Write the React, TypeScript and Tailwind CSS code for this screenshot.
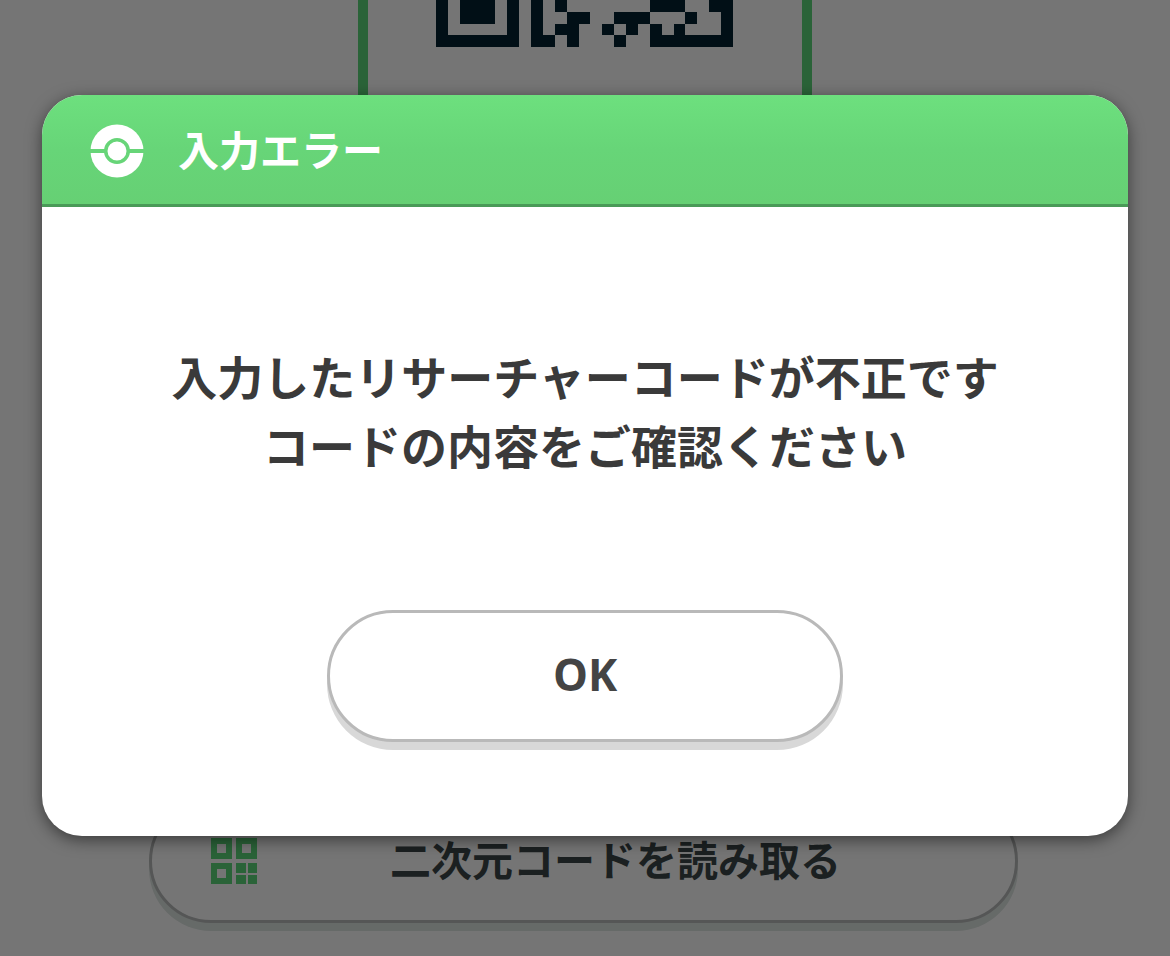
import React from 'react';

const QR_SIZE = 25;

// Last rows of the code, as [start, length] runs of dark modules
const QR_ROWS: [number, number][][] = [
  [[0, 1], [2, 3], [6, 1], [8, 1], [10, 1], [18, 3], [23, 2]],
  [[0, 1], [2, 3], [6, 1], [8, 1], [11, 2], [15, 3], [21, 1], [24, 1]],
  [[0, 1], [6, 1], [8, 1], [10, 2], [14, 1], [16, 1], [18, 1], [20, 1], [24, 1]],
  [[0, 7], [8, 2], [11, 1], [15, 1], [18, 7]],
];

const QrCode: React.FC = () => (
  <svg viewBox={`0 0 ${QR_SIZE} ${QR_ROWS.length}`} className="w-[297px] h-[47px]" preserveAspectRatio="none" shapeRendering="crispEdges" fill="#042130" aria-hidden="true">
    {QR_ROWS.map((runs, y) =>
      runs.map(([x, width]) => <rect key={`${x}-${y}`} x={x} y={y} width={width} height={1} />)
    )}
  </svg>
);

const QrIcon: React.FC = () => (
  <svg viewBox="0 0 46 46" className="w-[46px] h-[46px] shrink-0" fill="#5dd77a" fillRule="evenodd" aria-hidden="true">
    <path d="M0 0h21v21H0zM6 6v9h9V6z" />
    <path d="M25 0h21v21H25zM31 6v9h9V6z" />
    <path d="M0 25h21v21H0zM6 31v9h9v-9z" />
    <path d="M25 25h10v10H25zM37 25h9v10h-9zM25 37h10v9H25zM37 37h9v9h-9z" />
  </svg>
);

const BallIcon: React.FC = () => (
  <svg viewBox="0 0 54 54" className="w-[54px] h-[54px] shrink-0" aria-hidden="true">
    <circle cx="27" cy="27" r="26.5" fill="#fff" />
    <path d="M0 27h54" stroke="#67d578" strokeWidth="4" />
    <circle cx="27" cy="27" r="11.25" fill="#fff" stroke="#67d578" strokeWidth="3.5" />
  </svg>
);

const App: React.FC = () => {
  return (
    <div className="relative min-h-screen overflow-hidden bg-white font-[family-name:'Noto_Sans','Noto_Sans_CJK_JP',sans-serif] font-bold">
      {/* Page behind the dialog */}
      <main className="flex flex-col items-center pb-[33px]">
        <div className="w-[454px] h-[600px] pr-0.5 flex justify-center items-start border-x-10 border-b-10 border-[#5dd77a]">
          <QrCode />
        </div>
        <button className="mt-[199px] mr-[3px] w-[869px] max-w-full h-[124px] px-[59px] flex items-center rounded-full bg-white border-3 border-[#b9bcbb] shadow-[0_8px_0_#dfe6e3] text-[41px] text-[#3c4749]">
          <QrIcon />
          <span className="flex-1 pl-[18px] text-center whitespace-nowrap">二次元コードを読み取る</span>
        </button>
      </main>

      {/* Error dialog */}
      <div className="absolute inset-0 px-[42px] pt-[95px] bg-black/54">
        <div role="dialog" aria-modal="true" aria-labelledby="dialog-title" className="overflow-hidden rounded-[40px] bg-white shadow-[0_4px_16px_rgba(0,0,0,0.5)]">
          <header className="h-28 px-12 pt-0.5 flex items-center gap-[34px] border-b-3 border-[#4a9a58] bg-gradient-to-b from-[#6de07e] via-[#67d578] to-[#66d074]">
            <BallIcon />
            <h1 id="dialog-title" className="text-[41px] leading-none text-white">入力エラー</h1>
          </header>
          <div className="pt-[136px] pb-[94px] flex flex-col items-center gap-[129px]">
            <p className="text-center text-[46px] leading-[69px] text-[#3a3a3a]">
              入力したリサーチャーコードが不正です
              <br />
              コードの内容をご確認ください
            </p>
            <button className="w-[516px] max-w-full h-[132px] pb-1 rounded-full bg-white border-3 border-[#b9b9b9] shadow-[0_8px_0_#d8d8d8] font-[family-name:'Open_Sans',sans-serif] text-[44px] text-[#444444]">
              OK
            </button>
          </div>
        </div>
      </div>
    </div>
  );
};

export default App;
